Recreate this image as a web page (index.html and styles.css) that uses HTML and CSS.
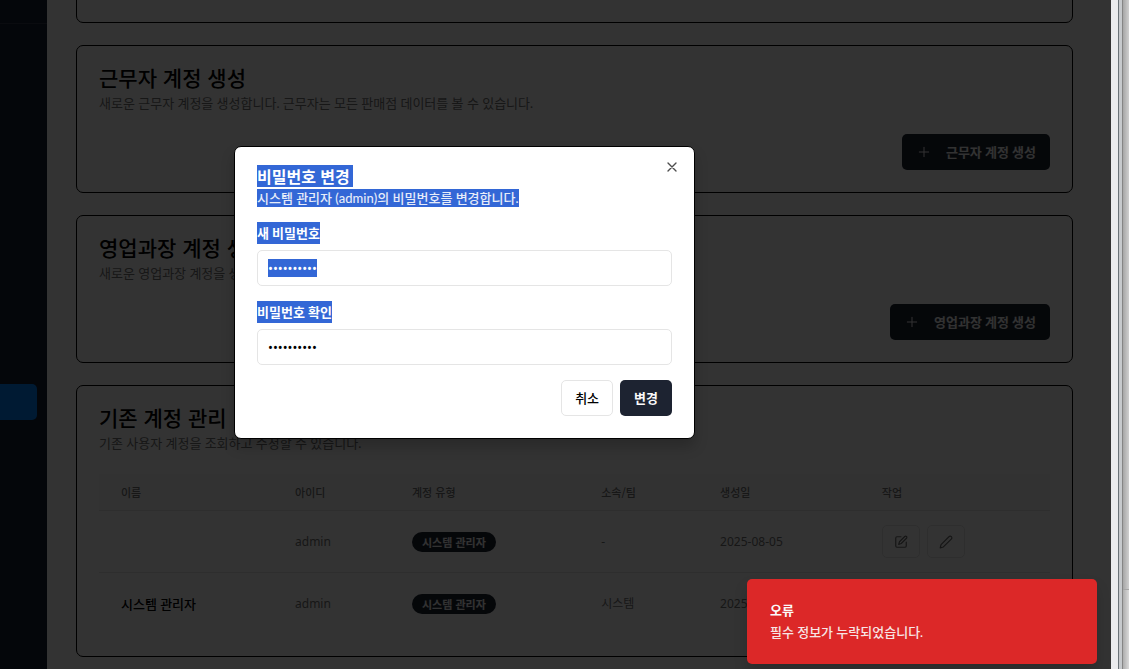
FILE: index.html
```html
<!DOCTYPE html>
<html lang="ko">
<head>
<meta charset="utf-8">
<meta name="viewport" content="width=device-width, initial-scale=1">
<title>계정 관리</title>
<link rel="stylesheet" href="styles.css">
</head>
<body>
<div class="screen">
  <div class="app">
    <aside class="sidebar">
      <div class="sidebar-head"></div>
      <nav class="sidebar-nav"><a class="nav-link" href="#"></a></nav>
    </aside>

    <main class="main">
      <section class="card">
        <div class="card-actions"><button class="btn btn-primary btn-blank" type="button"></button></div>
      </section>

      <section class="card">
        <h2 class="card-title">근무자 계정 생성</h2>
        <p class="card-desc">새로운 근무자 계정을 생성합니다. 근무자는 모든 판매점 데이터를 볼 수 있습니다.</p>
        <div class="card-actions">
          <button class="btn btn-primary" type="button">
            <svg class="icon" viewBox="0 0 24 24"><path d="M5 12h14M12 5v14"/></svg>
            근무자 계정 생성
          </button>
        </div>
      </section>

      <section class="card">
        <h2 class="card-title">영업과장 계정 생성</h2>
        <p class="card-desc">새로운 영업과장 계정을 생성합니다.</p>
        <div class="card-actions">
          <button class="btn btn-primary" type="button">
            <svg class="icon" viewBox="0 0 24 24"><path d="M5 12h14M12 5v14"/></svg>
            영업과장 계정 생성
          </button>
        </div>
      </section>

      <section class="card">
        <h2 class="card-title">기존 계정 관리</h2>
        <p class="card-desc">기존 사용자 계정을 조회하고 수정할 수 있습니다.</p>
        <table class="accounts">
          <colgroup>
            <col class="col-name"><col class="col-id"><col class="col-type"><col class="col-team"><col class="col-date"><col class="col-action">
          </colgroup>
          <thead>
            <tr><th>이름</th><th>아이디</th><th>계정 유형</th><th>소속/팀</th><th>생성일</th><th>작업</th></tr>
          </thead>
          <tbody>
            <tr>
              <td class="name"></td>
              <td>admin</td>
              <td><span class="badge">시스템 관리자</span></td>
              <td>-</td>
              <td>2025-08-05</td>
              <td>
                <div class="row-actions">
                  <button class="icon-btn" type="button" aria-label="수정">
                    <svg class="icon" viewBox="0 0 24 24"><path d="M12 3H5a2 2 0 0 0-2 2v14a2 2 0 0 0 2 2h14a2 2 0 0 0 2-2v-7"/><path d="M18.4 2.6a2.1 2.1 0 0 1 3 3L12.4 14.6 8 16l1.4-4.4z"/></svg>
                  </button>
                  <button class="icon-btn" type="button" aria-label="비밀번호 변경">
                    <svg class="icon" viewBox="0 0 24 24"><path d="M17 3a2.85 2.83 0 1 1 4 4L7.5 20.5 2 22l1.5-5.5Z"/></svg>
                  </button>
                </div>
              </td>
            </tr>
            <tr>
              <td class="name">시스템 관리자</td>
              <td>admin</td>
              <td><span class="badge">시스템 관리자</span></td>
              <td>시스템</td>
              <td>2025-08-05</td>
              <td></td>
            </tr>
          </tbody>
        </table>
      </section>
    </main>

    <div class="backdrop"></div>

    <form class="dialog" role="dialog" aria-labelledby="dialog-title">
      <button class="dialog-close" type="button" aria-label="닫기">
        <svg class="icon" viewBox="0 0 24 24"><path d="M18 6 6 18M6 6l12 12"/></svg>
      </button>
      <h2 class="dialog-title" id="dialog-title"><span class="marked">비밀번호 변경</span></h2>
      <p class="dialog-desc"><span class="marked">시스템 관리자 (admin)의 비밀번호를 변경합니다.</span></p>
      <div class="field">
        <label for="new-password"><span class="marked">새 비밀번호</span></label>
        <input class="input" id="new-password" type="password" value="password12">
      </div>
      <div class="field">
        <label for="confirm-password"><span class="marked">비밀번호 확인</span></label>
        <input class="input" id="confirm-password" type="password" value="password12">
      </div>
      <div class="dialog-actions">
        <button class="btn btn-outline" type="button">취소</button>
        <button class="btn btn-primary" type="button">변경</button>
      </div>
    </form>

    <div class="toast" role="alert">
      <strong class="toast-title">오류</strong>
      <p class="toast-desc">필수 정보가 누락되었습니다.</p>
    </div>
  </div>
  <div class="window-edge">
    <div class="scroll-track"></div>
    <div class="frame"></div>
    <div class="behind"><div class="behind-top"></div><div class="behind-bottom"></div></div>
  </div>
</div>
<script src="select.js"></script>
</body>
</html>
```

FILE: styles.css
```css
* { box-sizing: border-box; }

body {
  margin: 0;
  font-family: Lato, "Noto Sans CJK KR", sans-serif;
  font-size: 13px;
  line-height: 18px;
  color: #000;
}

h2, p { margin: 0; }
button, input { font: inherit; color: inherit; }

.screen { display: flex; height: 100vh; overflow: hidden; }
.app { position: relative; flex: 1; min-width: 0; display: flex; overflow: hidden; background: #fff; }

.icon {
  width: 16px;
  height: 16px;
  fill: none;
  stroke: currentColor;
  stroke-width: 2;
  stroke-linecap: round;
  stroke-linejoin: round;
}

/* Sidebar */
.sidebar { width: 47px; background: #161e33; }
.sidebar-head { height: 24px; border-bottom: 1px solid #333b4d; }
.sidebar-nav { padding: 360px 10px 0 0; }
.nav-link { display: block; height: 36px; border-radius: 0 5px 5px 0; background: #0084ff; }

/* Cards */
.main {
  flex: 1;
  min-width: 0;
  display: flex;
  flex-direction: column;
  justify-content: flex-end;
  gap: 22px;
  padding: 0 38px 12px 29px;
}
.card { padding: 20px 22px 22px; border: 1px solid #000; border-radius: 7px; }
.card-title { font-family: "Noto Sans CJK KR", sans-serif; font-size: 21px; line-height: 22px; font-weight: 500; }
.card-desc { margin-top: 6px; color: #737373; }
.card-actions { display: flex; justify-content: flex-end; margin-top: 22px; }

.btn {
  display: inline-flex;
  align-items: center;
  justify-content: center;
  gap: 14px;
  height: 36px;
  padding: 0 13px;
  border: 1px solid transparent;
  border-radius: 5px;
  font-weight: 500;
  white-space: nowrap;
}
.btn .icon { stroke-width: 1.5; }
.btn-primary { background: #1d2331; color: #fafafa; font-weight: 700; }
.btn-outline { background: #fff; border-color: #e5e5e5; }
.btn-blank { width: 146px; }

/* Accounts table */
.accounts { width: 100%; margin-top: 22px; border-collapse: separate; border-spacing: 0; table-layout: fixed; }
.col-name { width: 18.3%; }
.col-id { width: 12.3%; }
.col-type { width: 19.9%; }
.col-team { width: 12.5%; }
.col-date { width: 17%; }
.col-action { width: 20%; }
.accounts th, .accounts td { padding: 0 22px; text-align: left; white-space: nowrap; border-bottom: 1px solid #e5e5e5; }
.accounts th { height: 37px; background: #fafafa; color: #737373; font-family: "Noto Sans CJK KR", sans-serif; font-size: 11px; font-weight: 500; }
.accounts td { height: 62px; color: #737373; font-family: "Noto Sans", "Noto Sans CJK KR", sans-serif; font-size: 12px; }
.accounts tbody tr:last-child td { height: 61px; border-bottom: 0; }
.accounts .name { color: #000; font-family: inherit; font-size: 13px; font-weight: 500; }

.badge {
  display: inline-block;
  padding: 0 10px;
  border-radius: 10px;
  background: #1d2331;
  color: #fafafa;
  font-family: "Noto Sans CJK KR", sans-serif;
  font-size: 11px;
  line-height: 20px;
  font-weight: 700;
}
.row-actions { display: flex; gap: 7px; }
.icon-btn {
  display: flex;
  align-items: center;
  justify-content: center;
  width: 38px;
  height: 33px;
  padding: 0;
  border: 1px solid #e5e5e5;
  border-radius: 5px;
  background: none;
  color: #6b6b6b;
}
.icon-btn .icon { width: 14px; height: 14px; }

/* Dialog */
.backdrop { position: absolute; inset: 0; background: rgba(0, 0, 0, 0.8); }
.dialog {
  position: absolute;
  top: 146px;
  left: 234px;
  width: 461px;
  padding: 18px 22px 22px;
  border: 1px solid #000;
  border-radius: 7px;
  background: #fff;
  box-shadow: 0 8px 14px rgba(0, 0, 0, 0.2);
}
.dialog-close {
  position: absolute;
  top: 12px;
  right: 14px;
  display: flex;
  padding: 0;
  border: 0;
  background: none;
  color: #4d4d4d;
}
.dialog-title { font-family: "Noto Sans CJK KR", sans-serif; font-size: 16px; line-height: 22px; font-weight: 700; }
.dialog-desc { margin-top: 2px; font-weight: 500; }
.marked { display: inline-block; background: #3367d6; color: #fff; }
.dialog-title .marked { padding-right: 3px; }
.dialog-desc .marked { color: #e6ecf9; }
.field { display: flex; flex-direction: column; gap: 6px; margin-top: 15px; }
.field label { line-height: 22px; font-weight: 700; }
.field label .marked { display: block; width: fit-content; }
.input {
  width: 100%;
  height: 36px;
  padding: 0 10px;
  border: 1px solid #e5e5e5;
  border-radius: 5px;
  outline: none;
  background: #fff;
  font-family: "Noto Sans", sans-serif;
}
.input::selection { background: #3367d6; color: #fff; }
.dialog-actions { display: flex; justify-content: flex-end; gap: 7px; margin-top: 15px; }

/* Toast */
.toast {
  position: absolute;
  right: 14px;
  bottom: 5px;
  width: 350px;
  padding: 22px 23px 23px;
  border-radius: 5px;
  background: #dc2828;
  color: #fafafa;
  box-shadow: 0 8px 14px rgba(0, 0, 0, 0.15);
}
.toast-title { display: block; font-weight: 700; }
.toast-desc { margin-top: 4px; font-weight: 500; opacity: 0.9; }

/* Browser frame and the window behind it */
.window-edge { display: flex; width: 18px; }
.scroll-track { width: 7px; background: #ebecee; }
.frame { width: 5px; background: #c6c9cc; border-left: 1px solid #6b7378; border-right: 1px solid #858585; }
.behind { flex: 1; display: flex; flex-direction: column; }
.behind-top { flex: 590; background: linear-gradient(90deg, #a6a6a6, #cfcfcf); border-bottom: 1px solid #a6a6a6; }
.behind-bottom { flex: 79; background: linear-gradient(90deg, #adadad, #dadada); }
```

FILE: select.js
```js
document.getElementById("new-password").select();
```
